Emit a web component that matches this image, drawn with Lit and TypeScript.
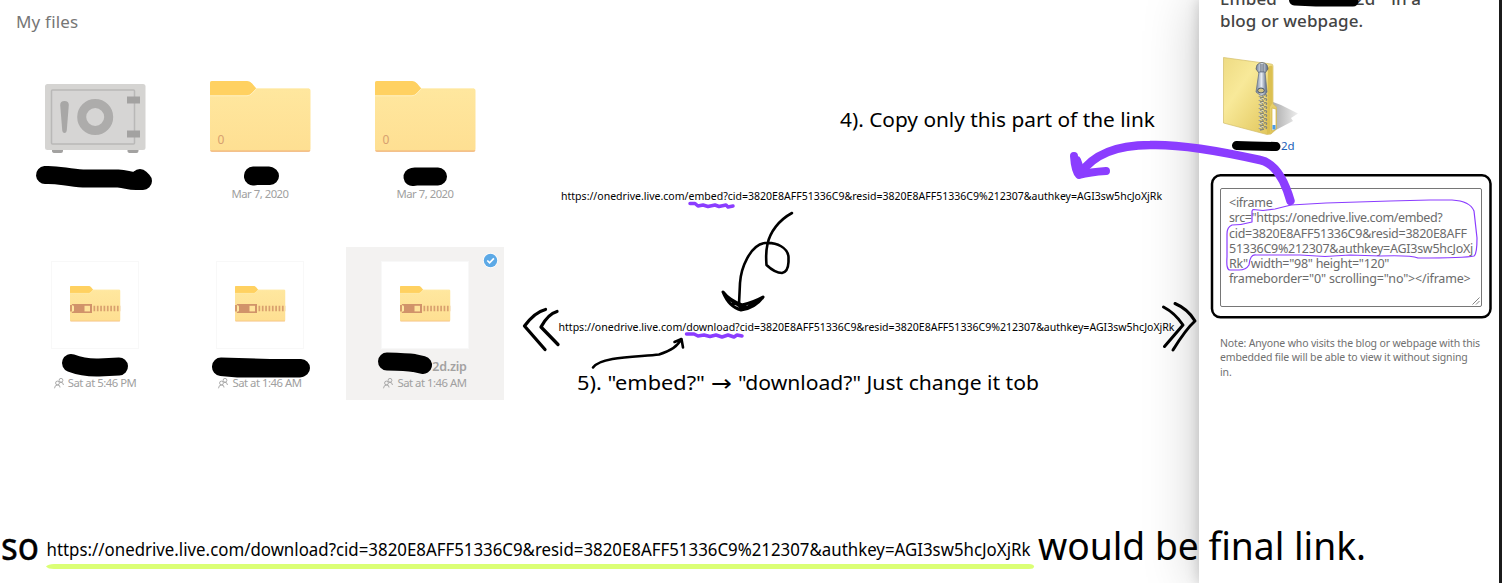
import { LitElement, html, svg, css } from "lit";
import { customElement, property } from "lit/decorators.js";

const folderShape = svg`
  <path d="M0 2Q0 0 2 0H37Q40 0 42 2.5L46.5 7.5H98.5Q100.5 7.5 100.5 9.500V68Q100.500 70.500 98.500 70.500H2Q0 70.500 0 68Z" fill="url(#body)"/>
  <path d="M0 2Q0 0 2 0H37Q40 0 42 2.5L46 7.500L42 12Q40 14.500 37 14.500H0Z" fill="#ffd161"/>
  <path d="M0 14.800H37Q40 14.500 42 12.300L46.500 7.500H99" fill="none" stroke="#fff0c0" stroke-width="1"/>
  <path d="M.5 69.500Q1 70.200 2 70.200H98.500Q99.500 70.200 100 69.500" fill="none" stroke="#f0b27a" stroke-width="1.200"/>`;
const folderGradient = svg`<defs><linearGradient id="body" x1="0" y1="0" x2="0" y2="1"><stop offset="0" stop-color="#ffe8a0"/><stop offset="1" stop-color="#fedf92"/></linearGradient></defs>`;

@customElement("file-tile")
class FileTile extends LitElement {
  @property() kind = "folder";
  @property() name = "";
  @property() date = "";
  @property({ type: Boolean }) selected = false;

  static styles = css`
    :host { display: block; }
    .tile { position: relative; width: 158px; height: 153px; display: grid; grid-template-rows: 112px 16px 16px; justify-items: center; box-sizing: border-box; }
    .tile.short { grid-template-rows: 112px 15px 16px; }
    .selected { background: #f3f2f1; }
    .art { display: flex; justify-content: center; align-items: flex-start; }
    .folder { padding-top: 22px; }
    .safe { padding-top: 25px; }
    .zip { padding-top: 14px; }
    .card { width: 86px; height: 86px; background: #fff; border: 1px solid #f8f8f8; display: flex; justify-content: center; align-items: flex-start; }
    .card svg { margin-top: 24px; }
    svg { display: block; overflow: visible; }
    .count { font: 12px "Noto Sans", sans-serif; fill: #d7a070; }
    .name { font: 600 12.500px/16px "Noto Sans", sans-serif; letter-spacing: -.25px; color: #a3a2a1; padding-left: 49px; }
    .date { display: flex; align-items: center; gap: 4px; font: 11.300px/16px "Noto Sans", sans-serif; letter-spacing: -.48px; color: #a0a0a0; white-space: nowrap; }
    .check { position: absolute; right: 6px; top: 6px; }
  `;

  art() {
    if (this.kind === "safe")
      return html`<svg width="101" height="70" viewBox="0 0 101 70">
        <path d="M7 65h11v2q0 2-2 2H10q-3 0-3-2zM82.500 65h11v2q0 2-2 2h-6q-3 0-3-2z" fill="#a3a2a1"/>
        <rect x="0" y="0" width="100.500" height="66" rx="2.500" fill="#d5d4d2"/>
        <rect x="6.500" y="6" width="83" height="54" rx="1" fill="#d6d5d4" stroke="#b9b8b7" stroke-width="1.500"/>
        <path d="M15.200 21q0-4 4.300-4t4.300 4L21.800 46q-.3 3-2.300 3t-2.300-3z" fill="#a8a7a6"/>
        <circle cx="50.200" cy="33" r="13.500" fill="none" stroke="#adacab" stroke-width="9"/>
        <rect x="82" y="12.500" width="13" height="7" fill="#a3a2a1"/>
        <rect x="82" y="46.500" width="13" height="7" fill="#a3a2a1"/>
      </svg>`;
    if (this.kind === "folder")
      return html`<svg width="101" height="72" viewBox="0 0 101 72">${folderGradient}${folderShape}
        <text class="count" x="7.500" y="62.500">0</text></svg>`;
    return html`<div class="card"><svg width="50.500" height="36" viewBox="0 0 50.500 36">${folderGradient}
      <g transform="scale(.5)">${folderShape}</g>
      <path d="M0 19H2V25.500H0Z" fill="#d69a6b"/>
      <path d="M1.500 18H22V27H1.500L3 25V20Z" fill="#d1936a"/>
      <rect x="2" y="19.500" width="2" height="6" rx="1" fill="#ffe8a0"/>
      <rect x="14.500" y="19.800" width="5.500" height="5.600" fill="#ffe39a"/>
      <path d="M23.500 22.500H50.500" stroke="#d9a06e" stroke-width="5.500" stroke-dasharray="1.700 1.650"/>
    </svg></div>`;
  }

  render() {
    return html`<div class="tile ${this.selected ? "selected" : ""} ${this.kind === "folder" ? "short" : ""}">
      <div class="art ${this.kind}">${this.art()}</div>
      <div class="name">${this.name}</div>
      <div class="date">
        ${this.kind === "zip" ? html`<svg width="10" height="11" viewBox="0 0 10 11" fill="none" stroke="#a2a2a2" stroke-width=".9"><circle cx="3.500" cy="5" r="1.900"/><path d="M.5 10.300Q.7 7 3.500 7T6 9.500"/><circle cx="7" cy="2.300" r="1.900"/><path d="M6 4.300Q9.300 3.800 9.500 7"/></svg>` : ""}
        <span>${this.date}</span>
      </div>
      ${this.selected ? html`<svg class="check" width="15" height="15" viewBox="0 0 15 15"><circle cx="7.500" cy="7.500" r="7.400" fill="#fff"/><circle cx="7.500" cy="7.500" r="6.700" fill="#5ca9e6"/><path d="M4.300 7.500L6.600 9.800L10.900 5.300" fill="none" stroke="#fff" stroke-width="1.700"/></svg>` : ""}
    </div>`;
  }
}

@customElement("embed-panel")
class EmbedPanel extends LitElement {
  static styles = css`
    :host { display: block; }
    .panel { box-sizing: border-box; width: 303px; height: 583px; padding: 0 17px 0 21px; background: #fff; border-right: 3px solid #1b1b1b; box-shadow: 0 0 52px rgba(0,0,0,.22), 0 0 13px rgba(0,0,0,.18); font-family: "Noto Sans", sans-serif; display: flex; flex-direction: column; }
    .title { margin: -12px 0 0; font-size: 17px; font-weight: 500; line-height: 22px; color: #444; white-space: pre; letter-spacing: .1px; }
    .hidden { display: inline-block; width: 66px; }
    .tail { margin-left: 4px; }
    .picture { width: 80px; height: 82px; margin: 23px 0 0 1px; }
    .link { margin-top: 1px; padding-left: 61px; font-size: 11.500px; line-height: 16px; color: #2160b8; }
    .code { box-sizing: border-box; position: relative; width: 262px; height: 119px; margin-top: 34px; padding: 6px 0 0 8px; border: 1px solid #767676; border-radius: 2px; font-size: 12.500px; line-height: 15.300px; color: #6b6b6b; white-space: pre; }
    .tight { letter-spacing: -.27px; }
    .tighter { letter-spacing: -.37px; }
    .slight { letter-spacing: -.18px; }
    .grip { position: absolute; right: 1px; bottom: 1px; }
    .note { margin: 29px 0 0; font-size: 10.500px; line-height: 14.400px; letter-spacing: -.15px; color: #707070; white-space: pre; }
  `;
  render() {
    const coils = Array.from({ length: 9 }, (_, i) => 40 + i * 4);
    return html`<div class="panel">
      <h2 class="title">Embed "<span class="hidden"></span>2d"<span class="tail"> in a</span>
blog or webpage.</h2>
      <svg class="picture" viewBox="0 0 80 82">
        <defs>
          <linearGradient id="front" x1="0" y1="0" x2="1" y2="1"><stop offset="0" stop-color="#eedb83"/><stop offset=".35" stop-color="#f8e999"/><stop offset="1" stop-color="#dfc254"/></linearGradient>
          <linearGradient id="shade" x1="0" y1="0" x2="1" y2="0"><stop offset="0" stop-color="#aaa"/><stop offset="1" stop-color="#eee"/></linearGradient>
          <linearGradient id="metal" x1="0" y1="0" x2="1" y2="0"><stop offset="0" stop-color="#75839b"/><stop offset=".5" stop-color="#e6ebf2"/><stop offset="1" stop-color="#52617b"/></linearGradient>
        </defs>
        <path d="M52 47L60 50L77 58.500L70 63L72 66L51 77Z" fill="url(#shade)"/>
        <path d="M2.500 2.500L50 9Q52 9 52 11V49L55.500 52V74L50 79L46 79.500L2.500 68Z" fill="url(#front)" stroke="#d2bd69" stroke-width=".7"/>
        <path d="M47 12Q51 9 51.500 12V48L49 52V78L46 79Z" fill="#dcc052"/>
        <path d="M51 53L55 54V74L51 76Z" fill="#fff" stroke="#cfb145" stroke-width=".7"/>
        <rect x="51.500" y="70" width="3" height="4.500" fill="#4b9ce6"/>
        ${coils.map((y) => svg`<path d="M38 ${y + 2}q2-3 4-1M39 ${y + 3}l4-1M43 ${y}q4-1 2 2" fill="none" stroke="#858778" stroke-width="1.300"/><path d="M38 ${y + 1}l4-1.500" stroke="#f1f0dc" stroke-width=".8"/>`)}
        <path d="M36 10Q41 5 46 10L47 14L44 18H38L35 14Z" fill="url(#metal)" stroke="#59616e" stroke-width=".8"/>
        <path d="M38 17H44L46 37Q44 41 39 40L35 37Z" fill="url(#metal)" stroke="#68758a" stroke-width=".8"/>
        <path d="M40 9V17M42 9V17" stroke="#384353" stroke-width=".8"/><ellipse cx="40" cy="35.500" rx="3.300" ry="2.500" fill="#d3c484" stroke="#455369"/>
      </svg>
      <div class="link">2d</div>
      <div class="code"><span class="tight">&lt;iframe</span>
<span class="tighter">src="https://onedrive.live.com/embed?</span>
<span class="tight">cid=3820E8AFF51336C9&amp;resid=3820E8AFF
51336C9%212307&amp;authkey=AGI3sw5hcJoXj
Rk" width="98" height="120"</span>
<span class="slight">frameborder="0" scrolling="no"&gt;&lt;/iframe&gt;</span><svg class="grip" width="8" height="8" viewBox="0 0 8 8"><path d="M.5 7.500L7.500 .5M4 7.500L7.500 4" stroke="#777" stroke-width=".9"/></svg></div>
      <p class="note">Note: Anyone who visits the blog or webpage with this
embedded file will be able to view it without signing
in.</p>
    </div>`;
  }
}

@customElement("ink-layer")
class InkLayer extends LitElement {
  static styles = css`
    :host { display: block; }
    svg { display: block; }
    text { font-family: "Noto Sans", sans-serif; fill: #000; }
    .ink { fill: none; stroke: #000; stroke-linecap: round; stroke-linejoin: round; }
    .violet { fill: none; stroke: #8b3dff; stroke-linecap: round; stroke-linejoin: round; }
    .small { font-size: 10.300px; }
    .medium { font-size: 20.500px; }
    .arrow { font: 23px "DejaVu Sans", sans-serif; }
    .url { font-size: 17.300px; }
    .large { font-size: 38px; }
    .bold { stroke: #000; stroke-width: .5px; font-size: 38px; }
  `;
  label(cls: string, x: number, y: number, width: number, text: string) {
    return svg`<text class=${cls} x=${x} y=${y} textLength=${width} lengthAdjust="spacingAndGlyphs">${text}</text>`;
  }
  render() {
    const query = "cid=3820E8AFF51336C9&resid=3820E8AFF51336C9%212307&authkey=AGI3sw5hcJoXjRk";
    return html`<svg width="1502" height="583" viewBox="0 0 1502 583">
      <g class="ink" stroke-width="18">
        <path d="M45 175C58 174 67 178 83 178.500H118C127 179 128 181 136 181H142M140 178L143 181"/>
        <path d="M253 176.500L256 176H270M253 175.500H269"/>
        <path d="M412.500 177L416 176.500H438"/>
        <path d="M71 363Q84 368 99 367.500L119 366.500"/>
        <path d="M221 367L238 368.500H300M221 366.500L270 368L301 368"/>
        <path d="M387 361.500Q407 362 414 363L423 365"/>
      </g>
      <path class="ink" stroke-width="11" d="M1294.500 0L1316 1H1353"/>
      <path class="ink" stroke-width="9" d="M1236.500 145.500L1252 146L1276 146.500"/>
      <g>
        ${this.label("medium", 840, 126.5, 315, "4). Copy only this part of the link")}
        ${this.label("small", 561, 199.5, 601, "https://onedrive.live.com/embed?" + query)}
        ${this.label("small", 558.5, 330.5, 616, "https://onedrive.live.com/download?" + query)}
        ${this.label("medium", 577, 390, 128, "5). \"embed?\"")}
        ${this.label("arrow", 711, 391, 21, "→")}
        ${this.label("medium", 738, 390, 301, "\"download?\" Just change it tob")}
        ${this.label("bold", 1, 560, 38, "so")}
        ${this.label("url", 46.5, 556, 984, "https://onedrive.live.com/download?" + query)}
        ${this.label("large", 1038, 560, 328, "would be final link.")}
      </g>
      <path d="M46 566.500Q48 564 54 564H1029Q1034 564 1034 566.500T1029 569H54Q48 569 46 566.500Z" fill="#dbff75"/>
      <g class="ink" stroke-width="2.600">
        <path d="M792 213C779 220 770 232 767.500 244Q765.500 253 766.500 265Q775 273 782 273Q788 272 788.500 262V257C788 248 777 242 765 243C750 245 741 268 740 283L739 304"/>
        <path d="M723 292Q729 307 741 310Q755 308 763 297Q754 302 742 305Q729 300 723 292ZM728 298L744 309L758 301M733 303L748 307" stroke-width="3"/>
        <path d="M593 367.500C601 356 640 357 659 354.500Q677 349 681 339M674.500 342L681.500 339L683 347.500"/>
        <path d="M545.500 309.500Q535 312 524.500 326L545 349.500M557 311.500Q548 314 541 327L558 344.500" stroke-width="3.300"/>
        <path d="M1163.500 307Q1175 313 1183 325L1164.500 346.500M1175 303.500Q1188 309 1195 321Q1186 329 1173 350" stroke-width="3"/>
      </g>
      <rect class="ink" x="1212" y="175.300" width="278.500" height="142" rx="8.500" stroke-width="2.500"/>
      <g class="violet">
        <path stroke-width="3.500" d="M690 203.500L695 203.500L698 206L703 205L708 206.500L715 205L719 206.500L726 205L728 207L733 206"/>
        <path stroke-width="3.500" d="M686.500 334L694 334L698 336L704 335L710 336.500L716 335L722 337L728 335L734 337L737 335L742 336"/>
        <path stroke-width="8.500" d="M1290.500 201Q1280 164 1260 160C1220 151 1180 144 1150 145C1115 145 1092 156 1080 174"/>
        <path stroke-width="8" d="M1074 156Q1075 171 1079 175Q1090 172 1106 171M1077 160L1082 174"/>
        <path stroke-width="1.200" d="M1253 209.500L1263 210.500L1275 209L1291 205L1326 203L1390 201L1430 200H1452Q1470 201 1474 211L1477 238Q1477 254 1474 256Q1465 258 1418 258Q1411 255 1380 256L1350 255L1325 256.500L1300 255H1256Q1250 254 1249 265Q1246 270 1239 270H1230Q1226 270 1227 257V234Q1227 227 1232 225Q1242 225 1252 222V211Z"/>
      </g>
    </svg>`;
  }
}

@customElement("app-root")
class AppRoot extends LitElement {
  static styles = css`
    :host { display: block; }
    .page { position: relative; width: 1502px; height: 583px; overflow: hidden; display: grid; grid-template-columns: 1199px 303px; background: #fff; }
    .files { padding: 10px 0 0 16px; }
    .heading { margin: 0 0 26px; font: 400 17px/23px "Noto Sans", sans-serif; letter-spacing: .2px; color: #767676; }
    .grid { display: grid; grid-template-columns: repeat(3, 158px); gap: 35px 7px; }
    .ink { position: absolute; inset: 0; }
  `;
  render() {
    const files = [
      { kind: "safe", date: "" },
      { kind: "folder", date: "Mar 7, 2020" },
      { kind: "folder", date: "Mar 7, 2020" },
      { kind: "zip", date: "Sat at 5:46 PM" },
      { kind: "zip", date: "Sat at 1:46 AM" },
      { kind: "zip", date: "Sat at 1:46 AM", name: "2d.zip", selected: true },
    ];
    return html`<div class="page">
      <main class="files">
        <h1 class="heading">My files</h1>
        <div class="grid">
          ${files.map((f) => html`<file-tile .kind=${f.kind} .date=${f.date} .name=${f.name ?? ""} .selected=${!!f.selected}></file-tile>`)}
        </div>
      </main>
      <embed-panel></embed-panel>
      <ink-layer class="ink"></ink-layer>
    </div>`;
  }
}
